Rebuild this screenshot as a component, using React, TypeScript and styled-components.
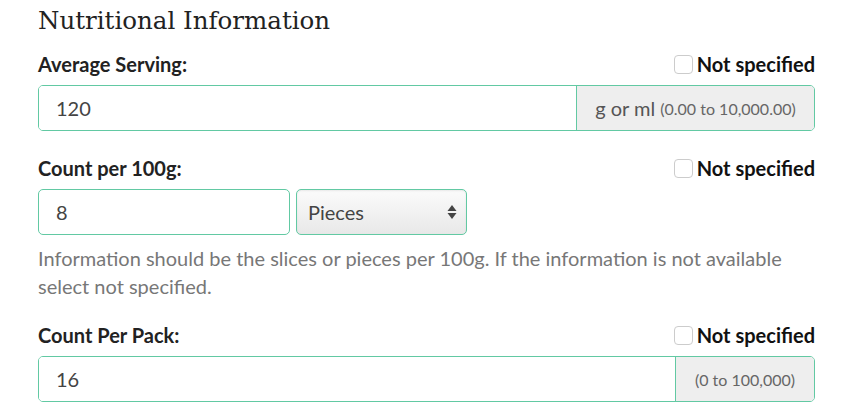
import React from 'react';
import styled, { createGlobalStyle } from 'styled-components';

const GlobalStyle = createGlobalStyle`
  body {
    margin: 0;
    background: #fff;
    font-family: Lato, "Noto Sans", sans-serif;
    color: #222;
  }
`;

const teal = '#62c9a3';

const Page = styled.div`
  padding: 0 43px 0 38px;
`;

const Heading = styled.h2`
  margin: 0;
  box-sizing: border-box;
  padding-top: 3px;
  height: 44px;
  font-family: "DejaVu Serif", serif;
  font-weight: 400;
  font-size: 24.5px;
  line-height: 36px;
  color: #222;
`;

const Group = styled.div<{ $gap: number }>`
  margin-top: ${(p) => p.$gap}px;
`;

const LabelRow = styled.div`
  display: flex;
  justify-content: space-between;
  align-items: center;
  height: 26px;
  margin-bottom: 8px;
`;

const Label = styled.label`
  font-weight: 700;
  font-size: 20px;
  color: #222;
`;

const CheckLabel = styled.label`
  display: flex;
  align-items: center;
  gap: 4px;
  font-weight: 700;
  font-size: 20px;
  color: #111;
`;

const Box = styled.span`
  width: 17px;
  height: 17px;
  border: 1px solid #ccc;
  border-radius: 4px;
  background: #fff;
`;

const InputGroup = styled.div`
  display: flex;
  height: 46px;
  border: 1px solid ${teal};
  border-radius: 5px;
  overflow: hidden;
  box-sizing: border-box;
`;

const Field = styled.input`
  flex: 1;
  min-width: 0;
  border: none;
  outline: none;
  padding: 0 17px;
  font-family: Lato, sans-serif;
  font-size: 20px;
  color: #444;
`;

const Addon = styled.div<{ $width: number }>`
  width: ${(p) => p.$width}px;
  box-sizing: border-box;
  display: flex;
  align-items: center;
  justify-content: center;
  gap: 5px;
  padding: 0 14px;
  background: #eee;
  border-left: 1px solid ${teal};
  font-size: 20px;
  color: #555;
  white-space: nowrap;
`;

const Small = styled.span`
  font-size: 16px;
  color: #666;
`;

const Inline = styled.div`
  display: flex;
  gap: 6px;
`;

const Single = styled.input`
  width: 252px;
  height: 46px;
  box-sizing: border-box;
  border: 1px solid ${teal};
  border-radius: 5px;
  outline: none;
  padding: 0 17px;
  font-family: Lato, sans-serif;
  font-size: 20px;
  color: #444;
`;

const SelectWrap = styled.div`
  position: relative;
  width: 171px;
  height: 46px;
`;

const Select = styled.select`
  appearance: none;
  width: 100%;
  height: 100%;
  box-sizing: border-box;
  border: 1px solid ${teal};
  border-radius: 5px;
  padding: 0 11px;
  background: linear-gradient(#fbfbfb, #e8e8e8);
  box-shadow: inset 0 1px 2px rgba(0, 0, 0, 0.08);
  font-family: Lato, sans-serif;
  font-size: 20px;
  color: #444;
`;

const Arrows = styled.svg`
  position: absolute;
  right: 10px;
  top: 15px;
  pointer-events: none;
`;

const Help = styled.p`
  margin: 9px 0 0;
  font-size: 20px;
  line-height: 28px;
  color: #777;
`;

const NotSpecified = () => (
  <CheckLabel>
    <Box />
    Not specified
  </CheckLabel>
);

export default function App() {
  return (
    <Page>
      <GlobalStyle />
      <Heading>Nutritional Information</Heading>

      <Group $gap={7}>
        <LabelRow>
          <Label>Average Serving:</Label>
          <NotSpecified />
        </LabelRow>
        <InputGroup>
          <Field defaultValue="120" />
          <Addon $width={238}>
            <span>g or ml</span>
            <Small>(0.00 to 10,000.00)</Small>
          </Addon>
        </InputGroup>
      </Group>

      <Group $gap={24}>
        <LabelRow>
          <Label>Count per 100g:</Label>
          <NotSpecified />
        </LabelRow>
        <Inline>
          <Single defaultValue="8" />
          <SelectWrap>
            <Select defaultValue="Pieces">
              <option>Pieces</option>
              <option>Slices</option>
            </Select>
            <Arrows width="10" height="16" viewBox="0 0 10 16">
              <path d="M5 1 L9.5 7 H0.5 Z" fill="#444" />
              <path d="M5 15 L9.5 9 H0.5 Z" fill="#444" />
            </Arrows>
          </SelectWrap>
        </Inline>
        <Help>
          Information should be the slices or pieces per 100g. If the information is not available
          select not specified.
        </Help>
      </Group>

      <Group $gap={22}>
        <LabelRow>
          <Label>Count Per Pack:</Label>
          <NotSpecified />
        </LabelRow>
        <InputGroup>
          <Field defaultValue="16" />
          <Addon $width={139}>
            <Small>(0 to 100,000)</Small>
          </Addon>
        </InputGroup>
      </Group>
    </Page>
  );
}
